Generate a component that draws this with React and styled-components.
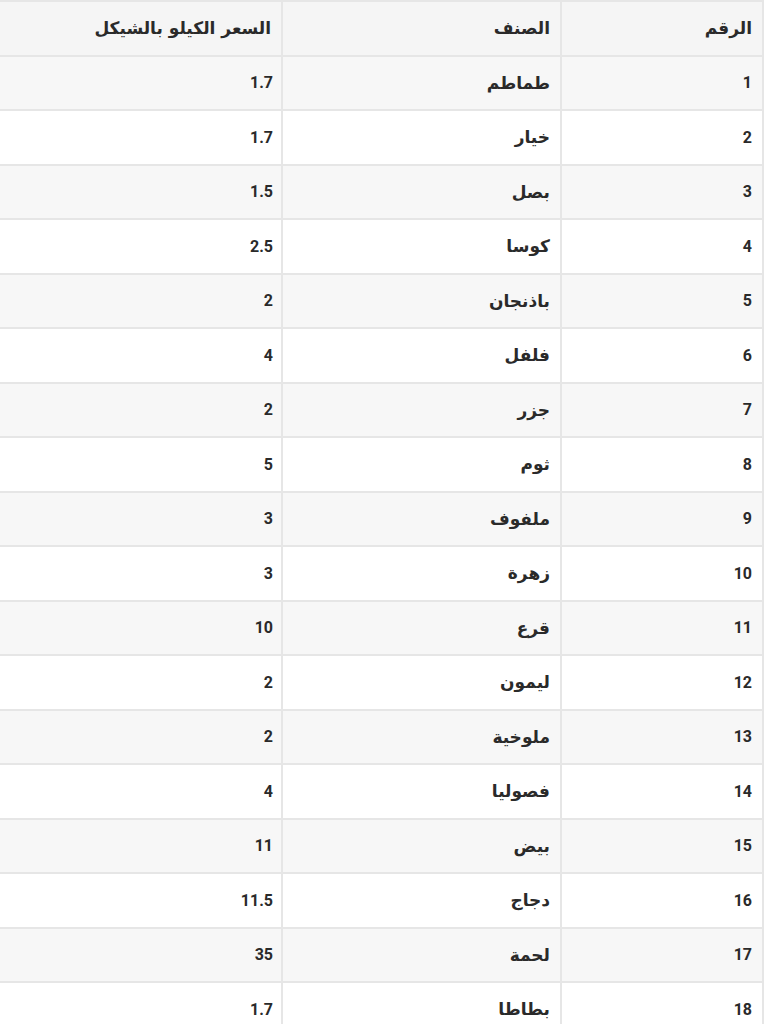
import React from "react";
import styled, { createGlobalStyle } from "styled-components";

const Global = createGlobalStyle`
  html, body { margin: 0; padding: 0; background: #ffffff; }
  body { font-family: Roboto, "DejaVu Sans", "Noto Sans", sans-serif; color: #222; }
`;

const Page = styled.div`
  width: 775px;
  padding: 0 11px 0 0;
  box-sizing: border-box;
  overflow: hidden;
`;

const Table = styled.table`
  direction: rtl;
  width: 766px;
  margin-left: -2px;
  border-collapse: collapse;
  table-layout: fixed;
`;

const Row = styled.tr`
  background: ${(p) => (p.$striped ? "#f7f7f7" : "#ffffff")};
`;

const HeadCell = styled.th`
  height: 54.5px;
  padding: 0 10px;
  text-align: right;
  font-family: "DejaVu Sans", sans-serif;
  font-weight: 700;
  font-size: 17px;
  color: #2a2a2a;
  background: #f5f5f5;
  border: 2px solid #e6e6e6;
  box-sizing: border-box;
`;

const Cell = styled.td`
  height: 54.5px;
  padding: 0 ${(p) => p.$pad ?? 10}px;
  text-align: right;
  font-family: ${(p) => (p.$arabic ? '"DejaVu Sans", sans-serif' : 'Roboto, sans-serif')};
  font-weight: 700;
  font-size: ${(p) => (p.$arabic ? 17 : 16)}px;
  color: #2a2a2a;
  border: 2px solid #e6e6e6;
  box-sizing: border-box;
`;

const data = [
  ["طماطم", "1.7"],
  ["خيار", "1.7"],
  ["بصل", "1.5"],
  ["كوسا", "2.5"],
  ["باذنجان", "2"],
  ["فلفل", "4"],
  ["جزر", "2"],
  ["ثوم", "5"],
  ["ملفوف", "3"],
  ["زهرة", "3"],
  ["قرع", "10"],
  ["ليمون", "2"],
  ["ملوخية", "2"],
  ["فصوليا", "4"],
  ["بيض", "11"],
  ["دجاج", "11.5"],
  ["لحمة", "35"],
  ["بطاطا", "1.7"],
];

export default function App() {
  return (
    <Page>
      <Global />
      <Table>
        <colgroup>
          <col style={{ width: 202 }} />
          <col style={{ width: 279 }} />
          <col />
        </colgroup>
        <thead>
          <tr>
            <HeadCell>الرقم</HeadCell>
            <HeadCell>الصنف</HeadCell>
            <HeadCell>السعر الكيلو بالشيكل</HeadCell>
          </tr>
        </thead>
        <tbody>
          {data.map(([name, price], i) => (
            <Row key={i} $striped={i % 2 === 0}>
              <Cell>{i + 1}</Cell>
              <Cell $arabic>{name}</Cell>
              <Cell $pad={8}>{price}</Cell>
            </Row>
          ))}
        </tbody>
      </Table>
    </Page>
  );
}
